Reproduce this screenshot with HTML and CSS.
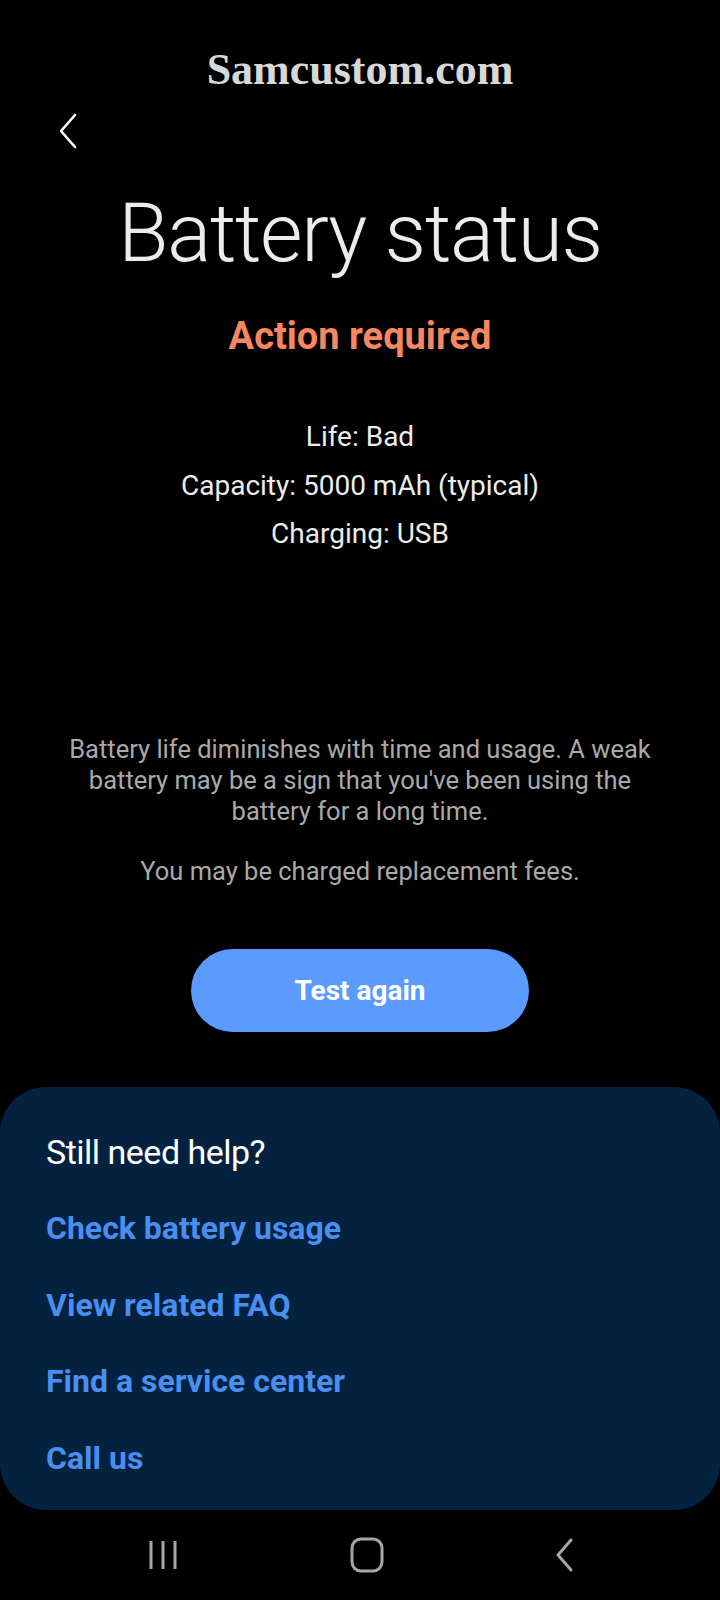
FILE: index.html
```html
<!DOCTYPE html>
<html lang="en">
<head>
  <meta charset="UTF-8">
  <title>Battery status</title>
  <link rel="stylesheet" href="styles.css">
</head>
<body>
  <div class="screen">
    <div class="watermark">Samcustom.com</div>

    <div class="topbar">
      <svg class="back" width="20" height="36" viewBox="0 0 20 36">
        <path d="M17 2 L3 18 L17 34" fill="none" stroke="#fff" stroke-width="2.6" stroke-linecap="round" stroke-linejoin="round"/>
      </svg>
    </div>

    <h1 class="title">Battery status</h1>
    <div class="status">Action required</div>

    <div class="info">
      <div>Life: Bad</div>
      <div>Capacity: 5000 mAh (typical)</div>
      <div>Charging: USB</div>
    </div>

    <p class="desc">Battery life diminishes with time and usage. A weak battery may be a sign that you've been using the battery for a long time.</p>
    <p class="desc fees">You may be charged replacement fees.</p>

    <div class="actions">
      <button class="btn">Test again</button>
    </div>

    <div class="sheet">
      <div class="sheet-title">Still need help?</div>
      <a class="link">Check battery usage</a>
      <a class="link">View related FAQ</a>
      <a class="link">Find a service center</a>
      <a class="link">Call us</a>
    </div>

    <div class="navbar">
      <svg width="32" height="32" viewBox="0 0 32 32">
        <path d="M4 2 V30 M16 2 V30 M28 2 V30" stroke="#a6a6a6" stroke-width="3"/>
      </svg>
      <svg width="34" height="36" viewBox="0 0 34 36">
        <rect x="2" y="2" width="30" height="32" rx="9" fill="none" stroke="#a6a6a6" stroke-width="3"/>
      </svg>
      <svg width="20" height="34" viewBox="0 0 20 34">
        <path d="M17 2 L4 17 L17 32" fill="none" stroke="#a6a6a6" stroke-width="3" stroke-linecap="round" stroke-linejoin="round"/>
      </svg>
    </div>
  </div>
</body>
</html>
```

FILE: styles.css
```css
body {
  margin: 0;
  background: #000;
  font-family: Roboto, "Liberation Sans", sans-serif;
  color: #ececec;
}
.screen {
  width: 720px;
  height: 1600px;
  display: flex;
  flex-direction: column;
  overflow: hidden;
}
.watermark {
  padding-top: 45px;
  height: 50px;
  line-height: 50px;
  text-align: center;
  font-family: "Liberation Serif", serif;
  font-weight: bold;
  font-size: 44px;
  color: #d8d8d8;
}
.topbar {
  margin-top: 18px;
  height: 36px;
  padding-left: 58px;
}
.title {
  margin: 41px 0 0;
  font-weight: 300;
  font-size: 82px;
  line-height: 87px;
  letter-spacing: -1.3px;
  text-align: center;
  color: #ececec;
}
.status {
  margin-top: 37px;
  font-weight: bold;
  font-size: 38px;
  line-height: 44px;
  text-align: center;
  color: #f6875e;
}
.info {
  margin-top: 55px;
  font-size: 28px;
  line-height: 48.5px;
  text-align: center;
  color: #ececec;
}
.desc {
  margin: 175px 50px 0;
  font-size: 25.5px;
  line-height: 31px;
  text-align: center;
  color: #a9a9a9;
}
.desc.fees {
  margin-top: 29px;
}
.actions {
  margin-top: 62px;
  display: flex;
  justify-content: center;
}
.btn {
  width: 338px;
  height: 83px;
  border: none;
  border-radius: 42px;
  background: #5b9bff;
  color: #fff;
  font-family: Roboto, "Liberation Sans", sans-serif;
  font-weight: bold;
  font-size: 28px;
}
.sheet {
  margin-top: 55px;
  height: 423px;
  box-sizing: border-box;
  padding: 45px 46px 0;
  background: #022240;
  border-radius: 46px;
  display: flex;
  flex-direction: column;
  gap: 36.5px;
}
.sheet-title {
  font-size: 34px;
  line-height: 40px;
  color: #fff;
  letter-spacing: -0.5px;
}
.link {
  font-weight: bold;
  font-size: 32px;
  line-height: 40px;
  color: #4a8ef0;
}
.navbar {
  flex: 1;
  display: flex;
  justify-content: space-between;
  align-items: center;
  padding: 0 146px 0 147px;
}
```
